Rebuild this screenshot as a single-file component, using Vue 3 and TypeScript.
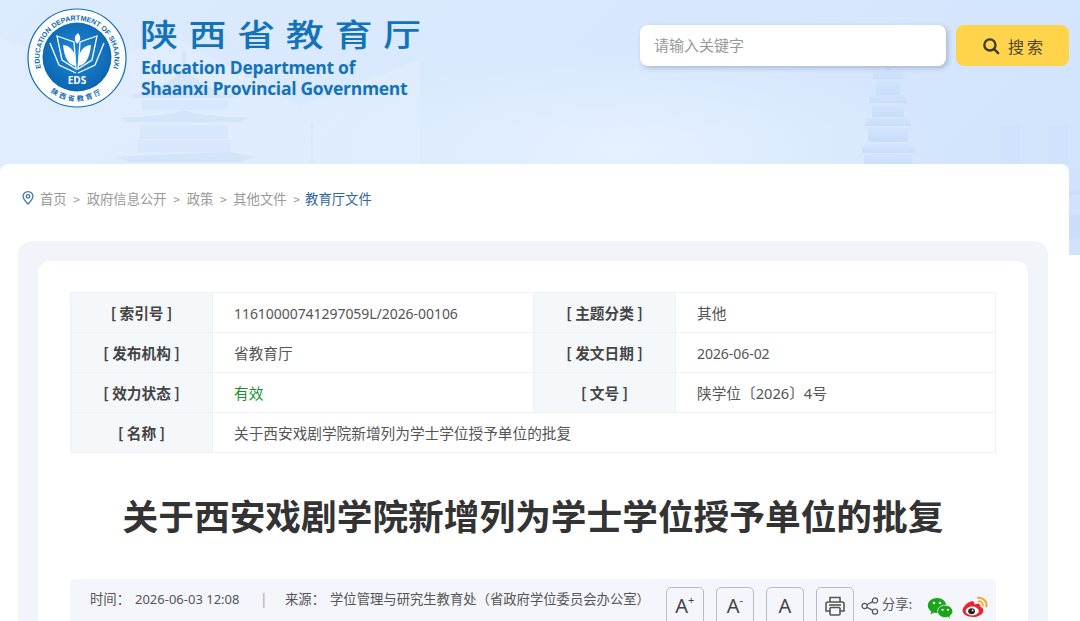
<template>
  <div class="page">
    <svg class="scenery" viewBox="0 0 1080 255" width="1080" height="255" aria-hidden="true">
      <defs>
        <linearGradient id="sky" x1="0" y1="0" x2="1" y2="0.25">
          <stop offset="0" stop-color="#dcebfe" />
          <stop offset="0.5" stop-color="#d8e8fe" />
          <stop offset="1" stop-color="#d3e5fd" />
        </linearGradient>
        <radialGradient id="glow" cx="0.5" cy="0.5" r="0.5">
          <stop offset="0" stop-color="#e6f1ff" />
          <stop offset="1" stop-color="#e6f1ff" stop-opacity="0" />
        </radialGradient>
        <linearGradient id="tower" x1="0" y1="0" x2="0" y2="1">
          <stop offset="0" stop-color="#d3e4fc" />
          <stop offset="1" stop-color="#c8ddfa" />
        </linearGradient>
      </defs>
      <rect width="1080" height="255" fill="url(#sky)" />
      <ellipse cx="620" cy="150" rx="330" ry="100" fill="url(#glow)" />
      <path d="M0 38 L70 62 L180 40 L300 105 L420 60 L420 164 L0 164Z" fill="#e3effe" opacity="0.5" />
      <g fill="#cfe1fb" opacity="0.7">
        <rect x="182" y="52" width="4" height="14" />
        <path d="M132 95 Q170 88 184 66 Q198 88 236 95 L232 98 L136 98Z" />
        <rect x="142" y="100" width="86" height="10" opacity="0.6" />
        <path d="M120 118 Q170 116 184 110 Q198 116 250 118 L240 122 L130 122Z" />
        <rect x="140" y="125" width="88" height="14" opacity="0.6" />
        <rect x="138" y="140" width="92" height="12" opacity="0.45" />
        <path d="M116 157 Q170 154 230 152 Q248 155 254 157 L240 162 L130 162Z" />
        <rect x="311" y="122" width="2" height="42" opacity="0.6" />
      </g>
      <g fill="url(#tower)">
        <rect x="886" y="66" width="4" height="5" />
        <path d="M874 71 H902 L905 79 H873Z" />
        <rect x="876" y="81" width="24" height="14" />
        <path d="M870 95 H906 L907 103 H869Z" />
        <rect x="872" y="105" width="32" height="12" />
        <path d="M866 118 H910 L911 126 H865Z" />
        <rect x="868" y="128" width="40" height="14" />
        <path d="M862 146 L868 144 H908 L914 146 V153 H862Z" />
        <rect x="864" y="154" width="48" height="12" />
      </g>
      <g fill="#d0e2fc">
        <rect x="1001" y="125" width="19" height="40" />
        <rect x="1048" y="125" width="20" height="40" />
        <rect x="1040" y="168" width="40" height="87" />
      </g>
      <g fill="#c8ddfa" opacity="0.7">
        <rect x="1069" y="190" width="11" height="5" />
        <rect x="1069" y="215" width="11" height="24" />
      </g>
    </svg>

    <header class="top">
      <div class="brand">
        <svg class="logo" viewBox="0 0 100 100" width="100" height="100" role="img" aria-label="陕西省教育厅">
          <defs>
            <path id="ringTop" d="M14.8 62.8 A37.5 37.5 0 1 1 85.2 62.8" />
            <path id="ringBottom" d="M14.8 74.7 A43 43 0 0 0 85.2 74.7" />
            <radialGradient id="disc" cx="0.5" cy="0.45" r="0.6">
              <stop offset="0" stop-color="#1f8ad8" />
              <stop offset="1" stop-color="#0a62ad" />
            </radialGradient>
          </defs>
          <circle cx="50" cy="50" r="49" fill="#fff" stroke="#0f6cb6" stroke-width="1.2" />
          <circle cx="50" cy="49" r="34.5" fill="url(#disc)" />
          <text class="ring-en"><textPath href="#ringTop" startOffset="50%" text-anchor="middle">EDUCATION DEPARTMENT OF SHAANXI</textPath></text>
          <text class="ring-cn"><textPath href="#ringBottom" startOffset="50%" text-anchor="middle">陕西省教育厅</textPath></text>
          <g fill="none" stroke="#fff" stroke-width="1.3">
            <path d="M30 28 L47 34 L49 61 L35 52Z" />
            <path d="M70 28 L53 34 L51 61 L65 52Z" />
            <path d="M23 35 L32 57 L49 65 M77 35 L68 57 L51 65" />
          </g>
          <path d="M36 37 Q49 38 49 58 Q38 57 36 37Z" fill="#fff" />
          <path d="M64 37 Q51 38 51 58 Q62 57 64 37Z" fill="#fff" />
          <path d="M50 36 Q45 30 51 25 Q56 31 50 36Z" fill="#fff" />
          <text x="50" y="76" class="eds">EDS</text>
        </svg>
        <div class="brand-text">
          <div class="brand-cn">陕西省教育厅</div>
          <div class="brand-en">Education Department of<br />Shaanxi Provincial Government</div>
        </div>
      </div>
      <div class="search">
        <input class="search-input" type="text" placeholder="请输入关键字" />
        <button class="search-btn" type="button">
          <svg viewBox="0 0 20 20" width="18" height="18" fill="none" stroke="#3d3a2e" stroke-width="2.6">
            <circle cx="8.8" cy="8.8" r="6.2" />
            <path d="M13.4 13.4 L18 18" stroke-linecap="round" />
          </svg>
          <span>搜索</span>
        </button>
      </div>
    </header>

    <main class="card">
      <nav class="crumbs">
        <svg viewBox="0 0 12 14" width="12" height="14" fill="none" stroke="#3f74ad" stroke-width="1.3">
          <path d="M6 13 C2.5 9.5 1 7.6 1 5.3 A5 4.6 0 0 1 11 5.3 C11 7.6 9.5 9.5 6 13Z" />
          <circle cx="6" cy="5.4" r="1.7" />
        </svg>
        <template v-for="(c, i) in crumbs" :key="c">
          <span v-if="i > 0" class="sep">&gt;</span>
          <a :class="{ current: i === crumbs.length - 1 }">{{ c }}</a>
        </template>
      </nav>

      <section class="panel">
        <article class="sheet">
          <div class="meta-table">
            <template v-for="row in rows" :key="row.label">
              <div class="th">[ {{ row.label }} ]</div>
              <div class="td" :class="{ wide: row.wide, ok: row.ok, num: row.num }">{{ row.value }}</div>
            </template>
          </div>

          <h1 class="title">关于西安戏剧学院新增列为学士学位授予单位的批复</h1>

          <div class="info">
            <span class="info-label">时间：</span>
            <span class="info-date">2026-06-03 12:08</span>
            <span class="info-bar">|</span>
            <span class="info-label">来源：</span>
            <span class="info-src">学位管理与研究生教育处（省政府学位委员会办公室）</span>
            <div class="tools">
              <button class="tool" type="button">A<sup>+</sup></button>
              <button class="tool" type="button">A<sup>-</sup></button>
              <button class="tool" type="button">A</button>
              <button class="tool" type="button">
                <svg viewBox="0 0 24 24" width="24" height="24" fill="none" stroke="#555" stroke-width="1.6">
                  <path d="M7 8 V3.5 H17 V8" />
                  <path d="M7 17 H3 V10 Q3 8 5 8 H19 Q21 8 21 10 V17 H17" />
                  <rect x="7" y="13.5" width="10" height="7.5" rx="1" />
                  <path d="M6 11 H18" />
                </svg>
              </button>
            </div>
            <svg class="share-icon" viewBox="0 0 18 18" width="18" height="18" fill="none" stroke="#555" stroke-width="1.2">
              <circle cx="3.6" cy="9" r="2.6" />
              <circle cx="14" cy="3.4" r="2.6" />
              <circle cx="14" cy="14.6" r="2.6" />
              <path d="M5.9 7.8 L11.7 4.6 M5.9 10.2 L11.7 13.4" />
            </svg>
            <span class="share-label">分享:</span>
            <svg class="wechat" viewBox="0 0 26 22" width="26" height="22">
              <path d="M10 1 C4.8 1 .8 4.4 .8 8.6 C.8 11 2.2 13 4.3 14.4 L3.4 17.4 L6.8 15.6 C8 16 9 16.1 10.2 16.1 C15.2 16.1 19.2 12.7 19.2 8.6 C19.2 4.4 15.2 1 10 1Z" fill="#1aa51a" />
              <path d="M18.2 8.2 C13.8 8.2 10.6 11 10.6 14.4 C10.6 17.8 13.8 20.6 18.2 20.6 C19 20.6 19.9 20.4 20.7 20.2 L23.6 21.6 L22.8 19 C24.6 17.8 25.8 16.2 25.8 14.4 C25.8 11 22.4 8.2 18.2 8.2Z" fill="#1aa51a" stroke="#f4f6fb" stroke-width=".8" />
              <circle cx="7" cy="6" r="1.3" fill="#fff" />
              <circle cx="13" cy="6" r="1.3" fill="#fff" />
              <circle cx="15.6" cy="12.8" r="1.1" fill="#fff" />
              <circle cx="21" cy="12.8" r="1.1" fill="#fff" />
            </svg>
            <svg class="weibo" viewBox="0 0 26 22" width="26" height="22">
              <path d="M11 21 C5.5 21 .6 18.6 .6 14.6 C.6 11.8 3.4 8.2 7 6.2 C10 4.6 11.8 5.2 12.2 6.6 C12.5 7.6 12.2 8.4 12.2 8.4 C15 7.4 18 7.6 18.4 9.4 C18.6 10.2 18.2 10.8 18.2 10.8 C20.4 11.4 21.4 12.8 21.4 14.4 C21.4 17.6 17.2 21 11 21Z" fill="#e6262d" />
              <ellipse cx="10.2" cy="15" rx="6.6" ry="4.4" fill="#fff" />
              <ellipse cx="9.6" cy="15.2" rx="3.4" ry="3" fill="#222" />
              <circle cx="10.6" cy="14.4" r=".9" fill="#fff" />
              <path d="M16 1.8 C21 1.2 25.4 5.6 24.4 10.6" fill="none" stroke="#f5a623" stroke-width="2" stroke-linecap="round" />
              <path d="M16.6 5.4 C19.2 5 21.4 7.2 20.9 9.8" fill="none" stroke="#f5a623" stroke-width="1.6" stroke-linecap="round" />
            </svg>
          </div>
        </article>
      </section>
    </main>
  </div>
</template>

<script setup lang="ts">
interface Row {
  label: string
  value: string
  wide?: boolean
  ok?: boolean
  num?: boolean
}

const crumbs = ['首页', '政府信息公开', '政策', '其他文件', '教育厅文件']

const rows: Row[] = [
  { label: '索引号', value: '11610000741297059L/2026-00106', num: true },
  { label: '主题分类', value: '其他' },
  { label: '发布机构', value: '省教育厅' },
  { label: '发文日期', value: '2026-06-02', num: true },
  { label: '效力状态', value: '有效', ok: true },
  { label: '文号', value: '陕学位〔2026〕4号' },
  { label: '名称', value: '关于西安戏剧学院新增列为学士学位授予单位的批复', wide: true },
]
</script>

<style>
html,
body {
  margin: 0;
  background: #fff;
  overflow: hidden;
}
</style>

<style scoped>
.page {
  position: relative;
  width: 1080px;
  height: 621px;
  overflow: hidden;
  font-family: "Noto Sans", "Noto Sans CJK SC", sans-serif;
  color: #444;
}
.scenery {
  position: absolute;
  left: 0;
  top: 0;
}
.top {
  position: relative;
  height: 164px;
  box-sizing: border-box;
  display: flex;
  justify-content: space-between;
  padding: 8px 11px 0 27px;
}
.brand {
  display: flex;
  gap: 14px;
  align-items: flex-start;
}
.logo {
  flex: none;
}
.ring-en {
  font: 700 7.1px "Liberation Sans", sans-serif;
  fill: #0f6cb6;
}
.ring-cn {
  font: 700 7px "Noto Sans CJK SC", sans-serif;
  fill: #0f6cb6;
  letter-spacing: 2.4px;
}
.eds {
  font: 700 10px "Open Sans", sans-serif;
  fill: #fff;
  text-anchor: middle;
}
.brand-cn {
  margin: 7px 0 0 -1px;
  height: 36px;
  font: 500 38px/36px "Noto Sans CJK SC", sans-serif;
  letter-spacing: 10.6px;
  color: #1272ba;
  white-space: nowrap;
  transform: scaleY(0.82);
  transform-origin: 0 50%;
}
.brand-en {
  margin-top: 6px;
  font: 700 17.5px/21px "Open Sans", sans-serif;
  letter-spacing: -0.3px;
  color: #1272ba;
  white-space: nowrap;
}
.search {
  display: flex;
  gap: 10px;
  margin-top: 17px;
  height: 41px;
}
.search-input {
  width: 306px;
  height: 41px;
  box-sizing: border-box;
  border: 0;
  border-radius: 8px;
  padding: 0 14px 2px 14px;
  background: #fff;
  box-shadow: 2px 2px 5px rgba(60, 80, 110, 0.3);
  font: 15px "Noto Sans CJK SC", sans-serif;
  outline: none;
}
.search-input::placeholder {
  color: #999;
}
.search-btn {
  width: 113px;
  height: 41px;
  border: 0;
  border-radius: 8px;
  background: #ffd34a;
  color: #4a4632;
  font: 16px "Noto Sans CJK SC", sans-serif;
  letter-spacing: 3px;
  display: flex;
  align-items: center;
  justify-content: center;
  gap: 8px;
  padding: 0 0 0 3px;
}
.card {
  position: relative;
  margin-right: 11px;
  background: #fff;
  border-radius: 8px 8px 0 0;
  height: 457px;
}
.crumbs {
  height: 68px;
  margin-bottom: 9px;
  box-sizing: border-box;
  padding: 0 0 0 22px;
  display: flex;
  align-items: center;
  font-size: 13.33px;
  color: #999;
  font-family: "Noto Sans CJK SC", sans-serif;
}
.crumbs svg {
  margin-right: 6px;
}
.sep {
  width: 20px;
  text-align: center;
  font-size: 12px;
}
.current {
  color: #2f659e;
  margin-left: -1.5px;
}
.panel {
  margin: 0 21px 0 18px;
  padding: 20px 20px 0;
  height: 380px;
  box-sizing: border-box;
  background: #f1f5f9;
  border-radius: 14px 14px 0 0;
}
.sheet {
  background: #fff;
  border-radius: 12px 12px 0 0;
  height: 360px;
  padding: 31px 32px 0;
}
.meta-table {
  display: grid;
  grid-template-columns: 142px 321px 142px 320px;
  grid-auto-rows: 40px;
  border-top: 1px solid #eef1f5;
  border-left: 1px solid #eef1f5;
  font-family: "Noto Sans CJK SC", sans-serif;
  font-size: 14.67px;
  width: 926px;
  box-sizing: border-box;
}
.th,
.td {
  display: flex;
  align-items: center;
  border-right: 1px solid #eef1f5;
  border-bottom: 1px solid #eef1f5;
  box-sizing: border-box;
}
.th {
  justify-content: center;
  background: #f5f8fb;
  font-weight: 700;
  color: #444;
  white-space: pre;
}
.td {
  padding-left: 21px;
  color: #555;
  font-family: "Noto Sans", "Noto Sans CJK SC", sans-serif;
}
.td.num {
  font-size: 14px;
  letter-spacing: -0.05px;
  padding-top: 1px;
}
.td.wide {
  grid-column: span 3;
}
.td.ok {
  color: #1a8f2e;
}
.title {
  margin: 37px 0 0;
  height: 50px;
  font: 700 35.7px/50px "Noto Sans CJK SC", sans-serif;
  color: #333;
  text-align: center;
  white-space: nowrap;
}
.info {
  margin-top: 39px;
  height: 60px;
  box-sizing: border-box;
  padding: 8px 0 0 20px;
  background: #f4f6fb;
  border-radius: 5px;
  display: flex;
  align-items: flex-start;
  font-family: "Noto Sans CJK SC", sans-serif;
  font-size: 13.33px;
  line-height: 24px;
  color: #555;
  white-space: nowrap;
}
.info-label {
  width: 45px;
}
.info-date {
  font-family: "Noto Sans", sans-serif;
  font-size: 13px;
  width: 127px;
}
.info-bar {
  width: 23px;
  color: #999;
}
.tools {
  display: flex;
  gap: 12px;
  margin-left: 16px;
}
.tool {
  width: 38px;
  height: 38px;
  box-sizing: border-box;
  padding: 0;
  border: 1px solid #b9bcc2;
  border-radius: 5px;
  background: #f4f6fb;
  color: #444;
  font: 20px/36px "Noto Sans", sans-serif;
  display: flex;
  align-items: center;
  justify-content: center;
}
.tool sup {
  font-size: 11px;
  line-height: 1;
  align-self: flex-start;
  margin-top: 6px;
}
.share-icon {
  margin: 10px 0 0 7px;
  flex: none;
}
.share-label {
  margin: 5px 0 0 3px;
  width: 45px;
}
.wechat {
  margin-top: 10px;
  flex: none;
}
.weibo {
  margin: 9px 0 0 9px;
  flex: none;
}
</style>
